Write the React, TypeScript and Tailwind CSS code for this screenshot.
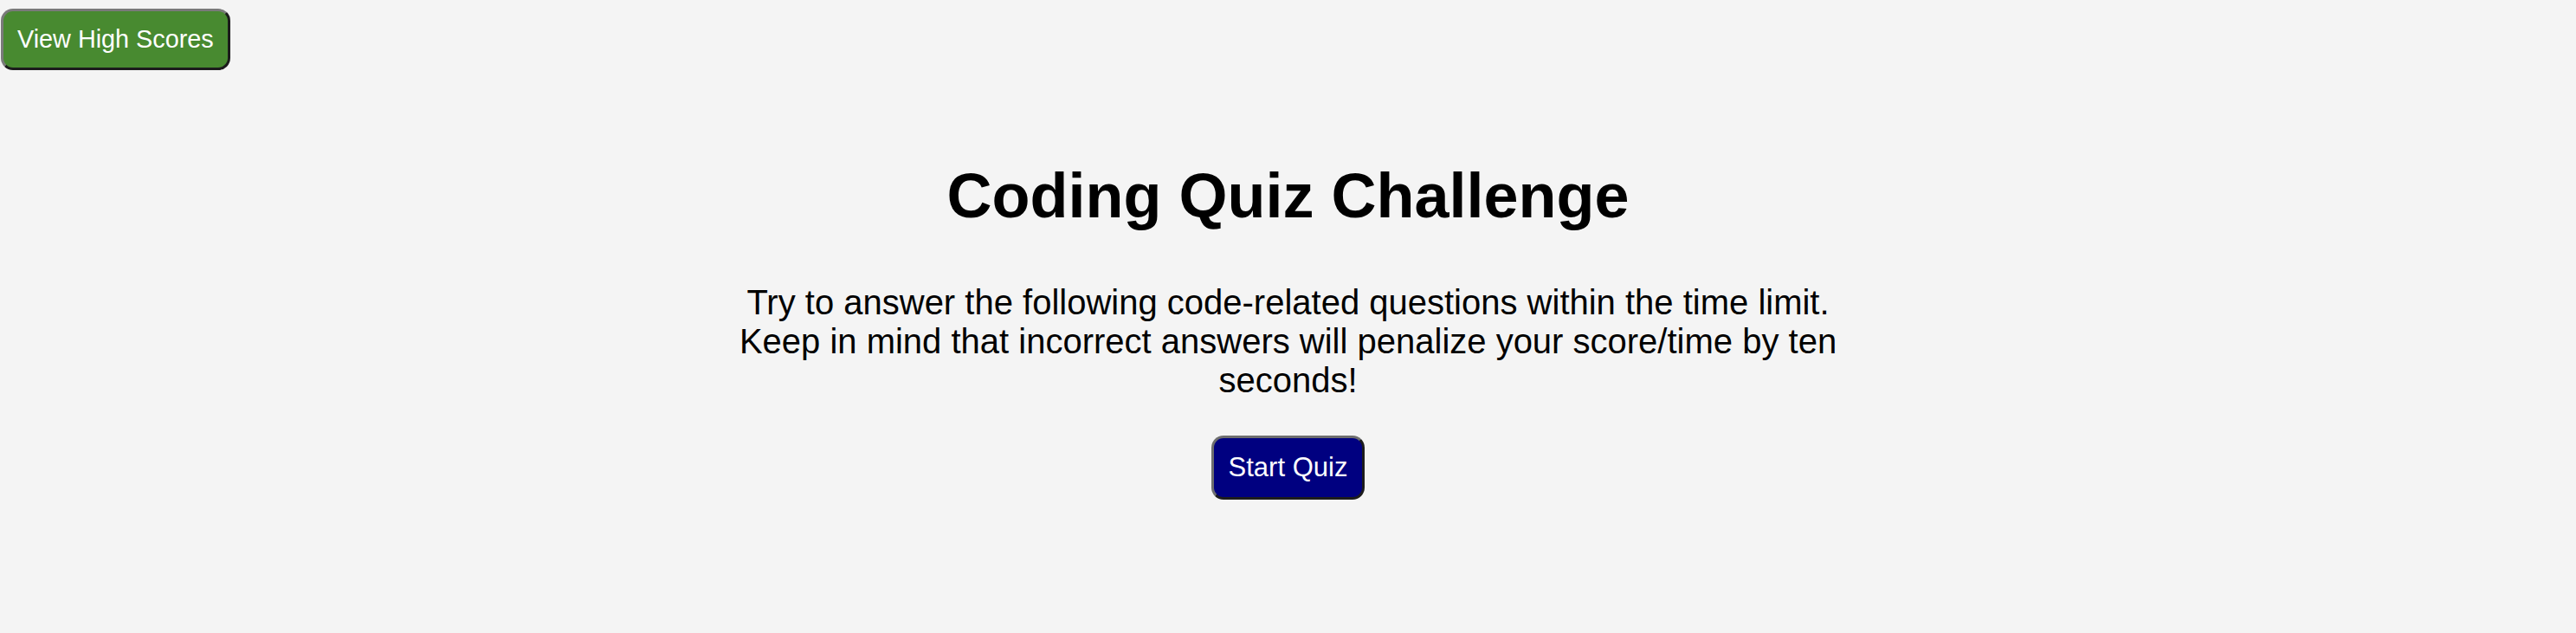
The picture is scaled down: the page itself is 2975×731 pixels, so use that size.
export default function App() {
  return (
    <div className="min-h-[731px] bg-[#f4f4f4] font-['Liberation_Sans',Arial,sans-serif] text-black">
      {/* Header */}
      <header className="flex pl-px pt-[10px]">
        <button className="rounded-[14px] border-[3px] border-t-[#7a7a7a] border-l-[#7a7a7a] border-b-[#1c1c1c] border-r-[#1c1c1c] bg-[#488a30] px-[16px] py-[16px] text-[28.8px] leading-[33px] text-white">
          View High Scores
        </button>
      </header>

      {/* Intro */}
      <main className="flex flex-col items-center mt-[104px]">
        <h1 className="text-[72px] leading-[82px] font-bold">Coding Quiz Challenge</h1>
        <p className="mt-[60px] w-[1300px] text-center text-[40px] leading-[45px]">
          Try to answer the following code-related questions within the time limit. Keep in mind that incorrect answers will penalize your score/time by ten seconds!
        </p>
        <button className="mt-[41px] rounded-[14px] border-[3px] border-t-[#6e6e6e] border-l-[#6e6e6e] border-b-[#1c1c1c] border-r-[#1c1c1c] bg-[#000080] px-[17px] py-[16px] text-[31px] leading-[36px] text-white">
          Start Quiz
        </button>
      </main>
    </div>
  );
}
